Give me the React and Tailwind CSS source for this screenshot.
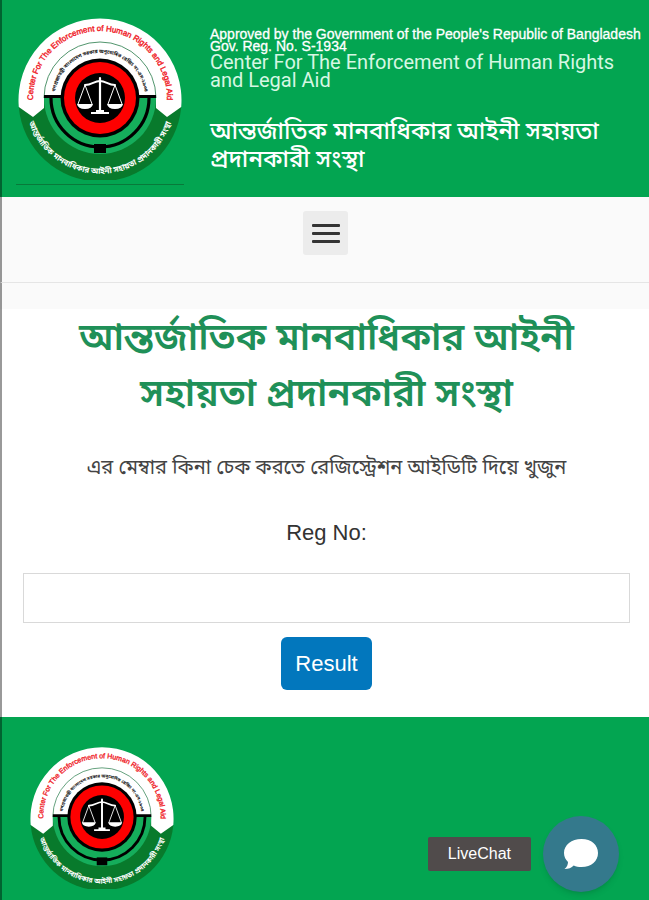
function Emblem({ id, className = "" }) {
  return (
    <svg viewBox="0 0 164 164" className={className} role="img" aria-label="Center For The Enforcement of Human Rights and Legal Aid">
      <defs>
        <path id={`${id}-top`} d="M15 97V82A67 67 0 0 1 149 82V97" />
        <path id={`${id}-inner`} d="M37 82A45 45 0 0 1 127 82" />
        <path id={`${id}-bottom`} d="M8 95A75 75 0 0 0 156 95" />
      </defs>
      <path d="M.8 91A81.5 81.5 0 0 0 163.2 91L130 80H34Z" fill="#087a2c" />
      {/* White upper band with its two pointed ends */}
      <path d="M.8 91A81.5 81.5 0 1 1 163.2 91L149 101L138 92V82H26V92L15 101Z" fill="#fff" />
      <path d="M26 82A56 56 0 0 0 138 82Z" fill="#15ad5b" />
      <path d="M26 82A56 56 0 0 1 138 82" fill="none" stroke="#247a48" strokeWidth="0.8" />
      <path d="M26 80.5H138M33 82A49 49 0 0 0 131 82" fill="none" stroke="#000" strokeWidth="3.2" />
      <path d="M76 128H88V137H76Z" fill="#000" />
      <circle cx="82" cy="82" r="39.5" />
      <circle cx="82" cy="82" r="36" fill="#fe0000" />
      <circle cx="82" cy="82" r="25" />
      {/* Scales */}
      <g stroke="#fff" fill="none" strokeLinecap="round">
        <path d="M82 62V96" strokeWidth="2.2" />
        <path d="M67 69C74 69 76 65 82 65S90 69 97 69" strokeWidth="1.8" />
        <path d="M67 69L60 88M67 69L74 88M97 69L90 88M97 69L104 88" strokeWidth="1" />
      </g>
      <path d="M59 88H75Q74 93 67 93T59 88ZM89 88H105Q104 93 97 93T89 88ZM78 94H86V96H91V98H73V96H78Z" fill="#fff" />
      <g textAnchor="middle">
        <text className="font-['Liberation_Sans',sans-serif] text-[8px]" fill="#f01f2b" stroke="#f01f2b" strokeWidth="0.4">
          <textPath href={`#${id}-top`} startOffset="50%">
            Center For The Enforcement of Human Rights and Legal Aid
          </textPath>
        </text>
        <text className="font-['Noto_Sans_Bengali','Noto_Sans',sans-serif] text-[5px] font-bold" fill="#111">
          <textPath href={`#${id}-inner`} startOffset="50%">
            গণপ্রজাতন্ত্রী বাংলাদেশ সরকার অনুমোদিত রেজিঃ নং-এস-১৯৩৪
          </textPath>
        </text>
        <text className="font-['Noto_Sans_Bengali','Noto_Sans',sans-serif] text-[8px] font-bold" fill="#fff">
          <textPath href={`#${id}-bottom`} startOffset="50%">
            আন্তর্জাতিক মানবাধিকার আইনী সহায়তা প্রদানকারী সংস্থা
          </textPath>
        </text>
      </g>
    </svg>
  );
}

function ChatBubble() {
  return (
    <svg width="36" height="32" viewBox="0 0 36 32" fill="#fff" aria-hidden="true">
      <path d="M18.5 1C28.5 1 35 7 35 15S28.5 29 18.5 29C15.5 29 13 28.5 10.7 27.5C8.5 30 5.5 31 1.5 31C4 29 5 26.5 5 24C2.5 21.5 1 18.5 1 15C1 7 8.5 1 18.5 1Z" />
    </svg>
  );
}

export default function App() {
  return (
    <div className="flex min-h-screen flex-col bg-white font-['Liberation_Sans',sans-serif]">
      <header className="flex border-l-2 border-black/40 bg-[#03a551] pt-4 pb-3">
        <div className="ml-3.5 shrink-0 border-b border-[#087a3a]">
          <Emblem id="header" className="mx-0.5 h-[164px] w-[164px]" />
          <div className="h-1" />
        </div>
        <div className="ml-[26px] text-white">
          <p className="pt-3 text-sm leading-3 [-webkit-text-stroke:0.3px_white]">
            Approved by the Government of the People's Republic of Bangladesh
            <br />
            Gov. Reg. No. S-1934
          </p>
          <p className="pt-px font-[Roboto,sans-serif] text-xl leading-[18px] text-[#d6f7e3]">
            Center For The Enforcement of Human Rights
            <br />
            and Legal Aid
          </p>
          <h2 className="pt-[30px] font-['Noto_Sans_Bengali','Noto_Sans',sans-serif] text-2xl leading-7 font-medium">
            আন্তর্জাতিক মানবাধিকার আইনী সহায়তা প্রদানকারী সংস্থা
          </h2>
        </div>
      </header>

      <nav className="flex justify-center border-b border-l-2 border-b-[#e5e5e5] border-l-black/40 bg-[#fafafa] pt-3.5 pb-[27px]">
        <button type="button" aria-label="Menu" className="flex h-11 w-[45px] flex-col items-center justify-center gap-[5px] rounded-[3px] bg-[#ececec]">
          <span className="h-[3px] w-7 rounded-[1px] bg-[#333]" />
          <span className="h-[3px] w-7 rounded-[1px] bg-[#333]" />
          <span className="h-[3px] w-7 rounded-[1px] bg-[#333]" />
        </button>
      </nav>
      <div className="h-[26px] border-l-2 border-black/40 bg-[#fafafa]" />

      <main className="border-l-2 border-black/40 pr-[19px] pb-[27px] pl-[21px] text-center">
        <h1 className="px-8 pt-1 font-['Noto_Sans_Bengali','Noto_Sans',sans-serif] text-[38px] leading-[56px] font-semibold text-[#1f9058]">
          আন্তর্জাতিক মানবাধিকার আইনী সহায়তা প্রদানকারী সংস্থা
        </h1>
        <p className="pt-[30px] font-['Noto_Sans_Bengali','Noto_Sans',sans-serif] text-xl leading-7 text-[#444]">
          এর মেম্বার কিনা চেক করতে রেজিস্ট্রেশন আইডিটি দিয়ে খুজুন
        </p>
        <form className="flex flex-col items-center pt-[34px]" onSubmit={(e) => e.preventDefault()}>
          <label htmlFor="reg-no" className="text-[22px] leading-8 text-[#333]">
            Reg No:
          </label>
          <input id="reg-no" type="text" className="mt-6 h-[50px] w-full border border-[#d9d9d9] bg-white px-4 text-xl outline-none" />
          <button type="submit" className="mt-3.5 h-[53px] rounded-md bg-[#0277bd] px-3.5 text-[22px] text-white">
            Result
          </button>
        </form>
      </main>

      <footer className="flex-1 border-l-2 border-black/40 bg-[#03a551] pt-7 pb-2.5 pl-7">
        <Emblem id="footer" className="h-36 w-36" />
      </footer>

      <div className="fixed right-[30px] bottom-2 flex items-center gap-3">
        <span className="rounded-xs bg-[#504b4b] px-5 py-[7px] text-base leading-5 text-white">LiveChat</span>
        <button type="button" aria-label="Open live chat" className="flex h-[76px] w-[76px] items-center justify-center rounded-full bg-[#34798c] shadow-md">
          <ChatBubble />
        </button>
      </div>
    </div>
  );
}
